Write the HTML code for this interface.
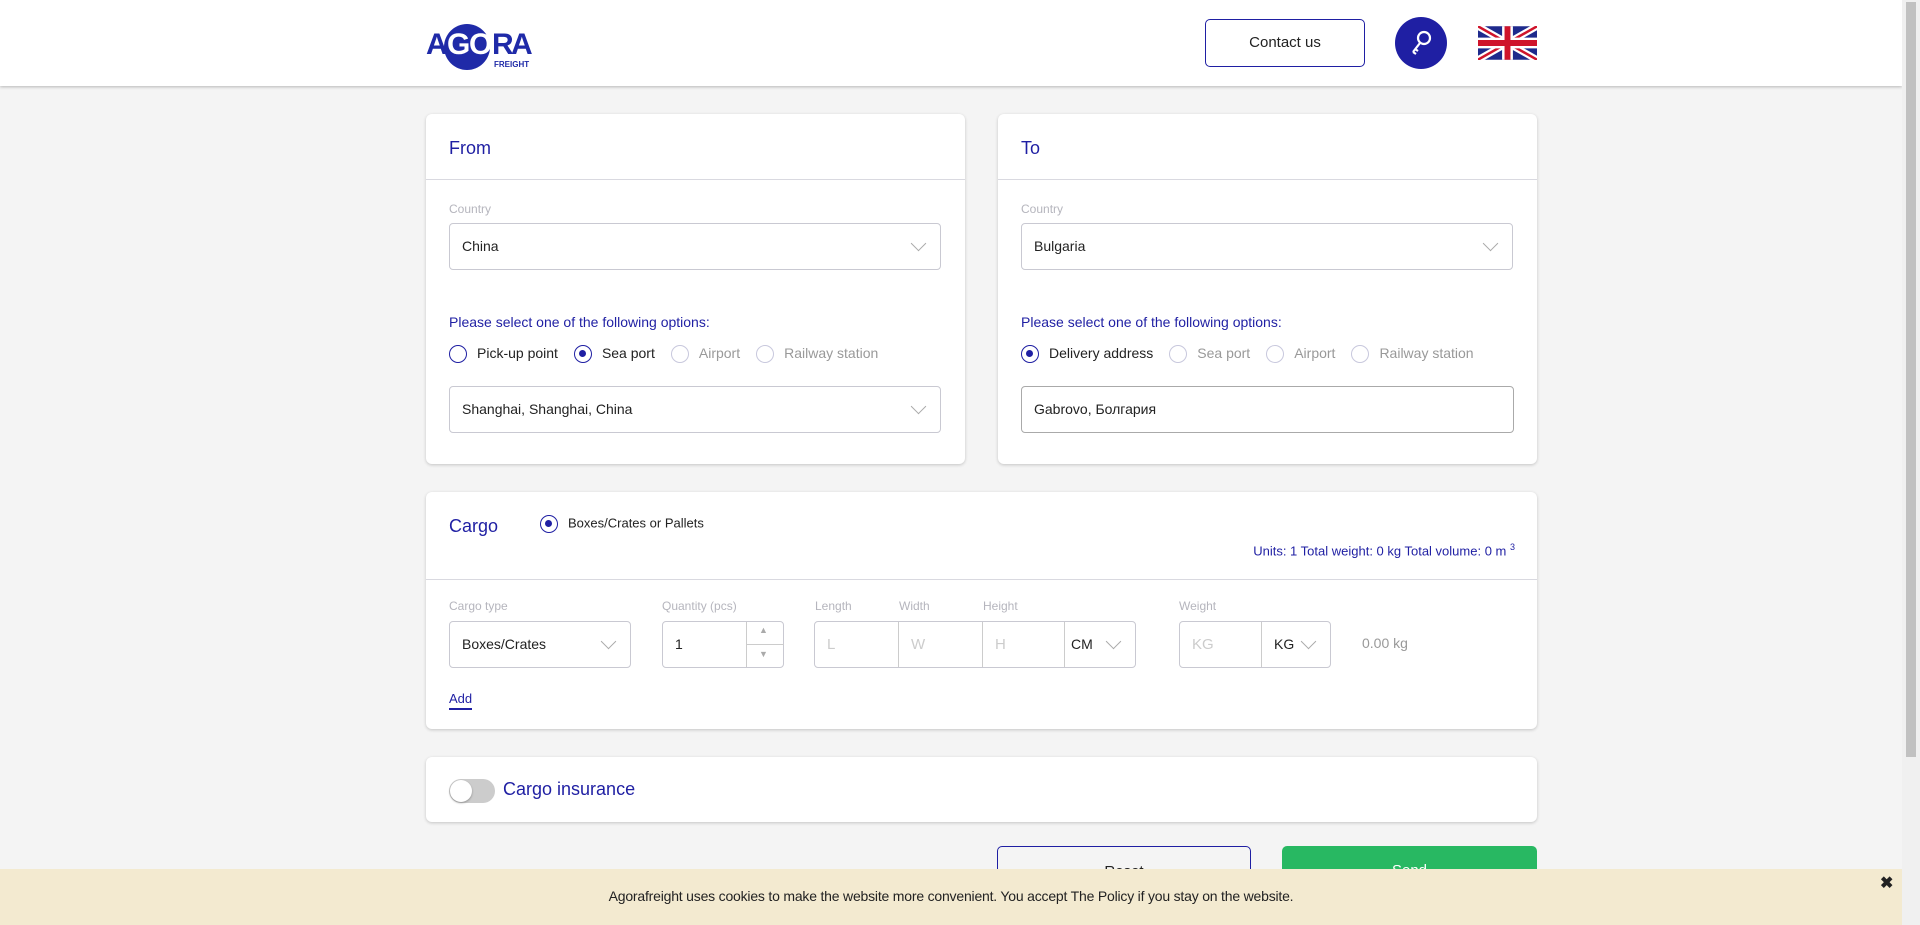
<!DOCTYPE html>
<html><head><meta charset="utf-8"><style>
*{box-sizing:border-box;margin:0;padding:0}
body{width:1920px;height:925px;overflow:hidden;background:#f4f4f4;font-family:"Liberation Sans",sans-serif;color:#222;position:relative;font-size:15px}
.a{position:absolute}
.hdr{left:0;top:0;width:1902px;height:86px;background:#fff;box-shadow:0 1px 3px rgba(0,0,0,.25)}
.card{background:#fff;border-radius:6px;box-shadow:0 1px 3px rgba(0,0,0,.2)}
.title{color:#1f1fa3;font-size:18px}
.line{height:1px;background:#d9d9e0}
.lbl{color:#b5b5bd;font-size:12px}
.box{border:1px solid #c9c9d2;border-radius:4px;background:#fff}
.chev{position:absolute;width:11px;height:11px;border-right:1px solid #aaa;border-bottom:1px solid #aaa;transform:rotate(45deg)}
.blue{color:#1f1fa3}
.rad{display:inline-block;width:18px;height:18px;border:1.5px solid #1f1fa3;border-radius:50%;vertical-align:middle;margin-right:10px;position:relative}
.rad.on::after{content:"";position:absolute;left:4px;top:4px;width:7px;height:7px;border-radius:50%;background:#1f1fa3}
.rad.dis{border-color:#c8c8dd}
.opt{font-size:14px;margin-right:16px}
.gray{color:#999}
.lg{position:absolute;top:4px;font-weight:bold;font-size:30px;color:#1f2aa8}
</style></head><body>
<div class="a hdr"></div>
<div class="a" style="left:426px;top:24px;width:104px;height:46px">
 <div class="a" style="left:18px;top:0;width:46px;height:46px;border-radius:50%;background:#1f2aa8"></div>
 <span class="lg" style="left:0">A</span>
 <span class="lg" style="left:21px;color:#fff">G</span>
 <span class="lg" style="left:43px;color:#fff">O</span>
 <span class="lg" style="left:66px">R</span>
 <span class="lg" style="left:85px">A</span>
 <div class="a" style="left:68px;top:36px;font-size:8px;color:#1f2aa8;font-weight:bold">FREIGHT</div>
</div>
<div class="a" style="left:1205px;top:19px;width:160px;height:48px;border:1px solid #1f1fa3;border-radius:5px;text-align:center;line-height:46px;font-size:15px">Contact us</div>
<div class="a" style="left:1395px;top:17px;width:52px;height:52px;border-radius:50%;background:#1f1fa3">
<svg width="52" height="52" viewBox="0 0 52 52"><circle cx="29" cy="21" r="6" fill="none" stroke="#fff" stroke-width="2.2"/><path d="M25 26 L18 35 M20 32 L23 34 M18 35 L21 37" stroke="#fff" stroke-width="2.2" fill="none"/></svg></div>
<svg class="a" style="left:1478px;top:26px" width="59" height="34" viewBox="0 0 60 34"><rect width="60" height="34" rx="3" fill="#1e2a8c"/><path d="M0 0L60 34M60 0L0 34" stroke="#fff" stroke-width="7"/><path d="M0 0L60 34M60 0L0 34" stroke="#cf142b" stroke-width="2.5"/><path d="M30 0V34M0 17H60" stroke="#fff" stroke-width="11"/><path d="M30 0V34M0 17H60" stroke="#cf142b" stroke-width="6"/></svg>

<div class="a card" style="left:426px;top:114px;width:539px;height:350px">
 <div class="a title" style="left:23px;top:24px">From</div>
 <div class="a line" style="left:0;top:65px;width:539px"></div>
 <div class="a lbl" style="left:23px;top:88px">Country</div>
 <div class="a box" style="left:23px;top:109px;width:492px;height:47px"><span class="a" style="left:12px;top:14px;font-size:14px">China</span><div class="chev" style="right:16px;top:14px"></div></div>
 <div class="a blue" style="left:23px;top:200px;font-size:14px">Please select one of the following options:</div>
 <div class="a" style="left:23px;top:231px;white-space:nowrap"><span class="rad"></span><span class="opt">Pick-up point</span><span class="rad on"></span><span class="opt">Sea port</span><span class="rad dis"></span><span class="opt gray">Airport</span><span class="rad dis"></span><span class="opt gray">Railway station</span></div>
 <div class="a box" style="left:23px;top:272px;width:492px;height:47px"><span class="a" style="left:12px;top:14px;font-size:14px">Shanghai, Shanghai, China</span><div class="chev" style="right:16px;top:14px"></div></div>
</div>
<div class="a card" style="left:998px;top:114px;width:539px;height:350px">
 <div class="a title" style="left:23px;top:24px">To</div>
 <div class="a line" style="left:0;top:65px;width:539px"></div>
 <div class="a lbl" style="left:23px;top:88px">Country</div>
 <div class="a box" style="left:23px;top:109px;width:492px;height:47px"><span class="a" style="left:12px;top:14px;font-size:14px">Bulgaria</span><div class="chev" style="right:16px;top:14px"></div></div>
 <div class="a blue" style="left:23px;top:200px;font-size:14px">Please select one of the following options:</div>
 <div class="a" style="left:23px;top:231px;white-space:nowrap"><span class="rad on"></span><span class="opt">Delivery address</span><span class="rad dis"></span><span class="opt gray">Sea port</span><span class="rad dis"></span><span class="opt gray">Airport</span><span class="rad dis"></span><span class="opt gray">Railway station</span></div>
 <div class="a box" style="left:23px;top:272px;width:493px;height:47px;border-color:#aaa"><span class="a" style="left:12px;top:14px;font-size:14px">Gabrovo, Болгария</span></div>
</div>
<div class="a card" style="left:426px;top:492px;width:1111px;height:237px">
 <div class="a title" style="left:23px;top:24px">Cargo</div>
 <div class="a" style="left:114px;top:23px;font-size:13px;white-space:nowrap"><span class="rad on"></span>Boxes/Crates or Pallets</div>
 <div class="a blue" style="right:22px;top:50px;font-size:13px">Units: 1 Total weight: 0 kg Total volume: 0 m <sup style="font-size:9px">3</sup></div>
 <div class="a line" style="left:0;top:87px;width:1111px"></div>
 <div class="a lbl" style="left:23px;top:107px">Cargo type</div>
 <div class="a lbl" style="left:236px;top:107px">Quantity (pcs)</div>
 <div class="a lbl" style="left:389px;top:107px">Length</div>
 <div class="a lbl" style="left:473px;top:107px">Width</div>
 <div class="a lbl" style="left:557px;top:107px">Height</div>
 <div class="a lbl" style="left:753px;top:107px">Weight</div>
 <div class="a box" style="left:23px;top:129px;width:182px;height:47px"><span class="a" style="left:12px;top:14px;font-size:14px">Boxes/Crates</span><div class="chev" style="right:16px;top:14px"></div></div>
 <div class="a box" style="left:236px;top:129px;width:122px;height:47px"><span class="a" style="left:12px;top:14px;font-size:14px">1</span><div class="a" style="left:83px;top:0;width:1px;height:45px;background:#ccc"></div><div class="a" style="left:83px;top:22px;width:38px;height:1px;background:#ccc"></div><span class="a" style="left:96px;top:3px;font-size:9px;color:#aaa">▲</span><span class="a" style="left:96px;top:27px;font-size:9px;color:#aaa">▼</span></div>
 <div class="a box" style="left:388px;top:129px;width:322px;height:47px">
  <span class="a" style="left:12px;top:14px;color:#ccc">L</span>
  <div class="a" style="left:83px;top:0;width:1px;height:45px;background:#ccc"></div><span class="a" style="left:96px;top:14px;color:#ccc">W</span>
  <div class="a" style="left:167px;top:0;width:1px;height:45px;background:#ccc"></div><span class="a" style="left:180px;top:14px;color:#ccc">H</span>
  <div class="a" style="left:249px;top:0;width:1px;height:45px;background:#ccc"></div><span class="a" style="left:256px;top:14px;font-size:14px">CM</span><div class="chev" style="right:16px;top:14px"></div>
 </div>
 <div class="a box" style="left:753px;top:129px;width:152px;height:47px">
  <span class="a" style="left:12px;top:14px;color:#ccc">KG</span>
  <div class="a" style="left:81px;top:0;width:1px;height:45px;background:#ccc"></div><span class="a" style="left:94px;top:14px;font-size:14px">KG</span><div class="chev" style="right:16px;top:14px"></div>
 </div>
 <div class="a" style="left:936px;top:143px;color:#999;font-size:14px">0.00 kg</div>
 <div class="a blue" style="left:23px;top:199px;font-size:13px;border-bottom:2px solid #1f1fa3;padding-bottom:2px">Add</div>
</div>
<div class="a card" style="left:426px;top:757px;width:1111px;height:65px">
 <div class="a" style="left:23px;top:22px;width:46px;height:24px;border-radius:12px;background:#ccc"><div class="a" style="left:1px;top:1px;width:22px;height:22px;border-radius:50%;background:#fff;box-shadow:0 1px 2px rgba(0,0,0,.3)"></div></div>
 <div class="a title" style="left:77px;top:22px">Cargo insurance</div>
</div>
<div class="a" style="left:997px;top:846px;width:254px;height:50px;border:1px solid #1f1fa3;border-radius:5px;text-align:center;padding-top:16px">Reset</div>
<div class="a" style="left:1282px;top:846px;width:255px;height:50px;background:#28b862;border-radius:5px;color:#fff;text-align:center;padding-top:16px">Send</div>
<div class="a" style="left:0;top:869px;width:1902px;height:56px;background:#f3ead0"><div class="a" style="left:0;width:1902px;top:19px;text-align:center;font-size:14px;color:#222;letter-spacing:-0.2px">Agorafreight uses cookies to make the website more convenient. You accept The Policy if you stay on the website.</div><div class="a" style="left:1880px;top:4px;font-weight:bold;font-size:16px">✖</div></div>
<div class="a" style="left:1902px;top:0;width:18px;height:925px;background:#f0f0f0"><div class="a" style="left:4px;top:2px;width:10px;height:755px;background:#c1c1c1"></div></div>
</body></html>
